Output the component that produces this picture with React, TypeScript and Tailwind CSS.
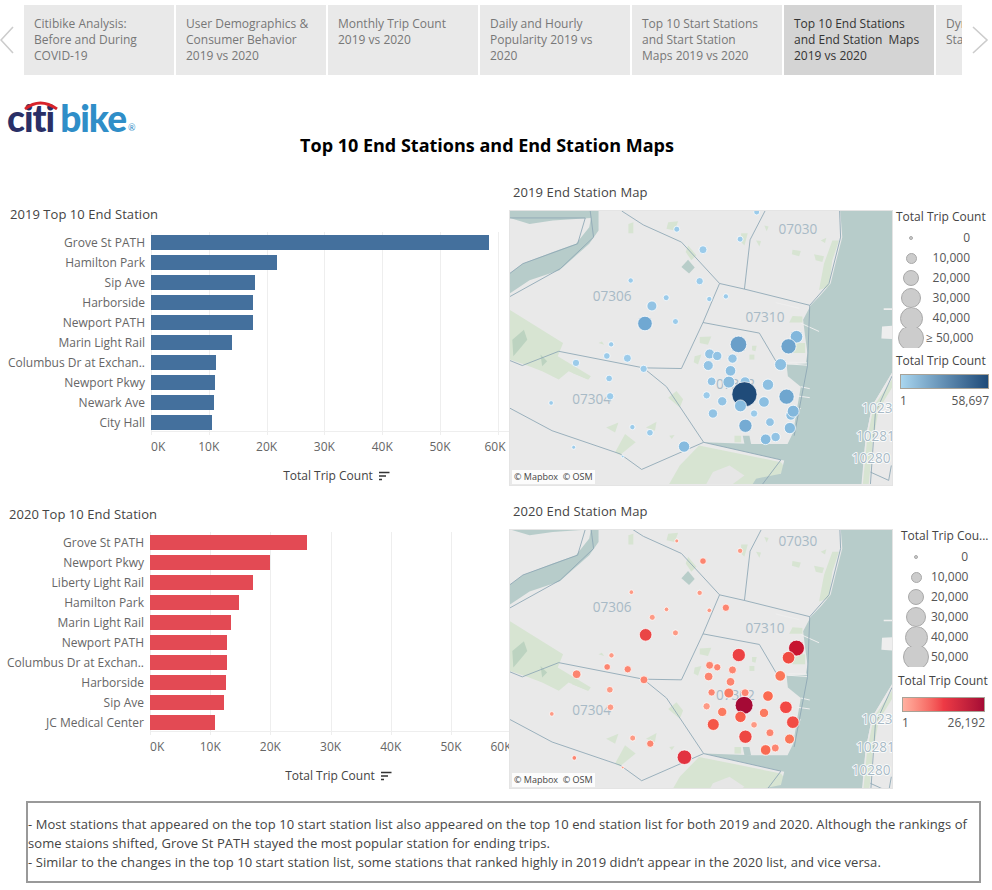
import React from "react";

const FONT = "font-['Open_Sans','Noto_Sans',sans-serif]";

const tabs = [
  { lines: ["Citibike Analysis:", "Before and During", "COVID-19"], w: "w-[150px]", active: false },
  { lines: ["User Demographics &", "Consumer Behavior", "2019 vs 2020"], w: "w-[150px]", active: false },
  { lines: ["Monthly Trip Count", "2019 vs 2020"], w: "w-[150px]", active: false },
  { lines: ["Daily and Hourly", "Popularity 2019 vs", "2020"], w: "w-[150px]", active: false },
  { lines: ["Top 10 Start Stations", "and Start Station", "Maps 2019 vs 2020"], w: "w-[150px]", active: false },
  { lines: ["Top 10 End Stations", "and End Station  Maps", "2019 vs 2020"], w: "w-[150px]", active: true },
  { lines: ["Dynamics", "Stations"], w: "w-[26px]", active: false },
];

type Row = [string, number];
const data2019: Row[] = [
  ["Grove St PATH", 338], ["Hamilton Park", 126], ["Sip Ave", 104], ["Harborside", 102], ["Newport PATH", 102],
  ["Marin Light Rail", 81], ["Columbus Dr at Exchan..", 65], ["Newport Pkwy", 64], ["Newark Ave", 63], ["City Hall", 61],
];
const data2020: Row[] = [
  ["Grove St PATH", 157], ["Newport Pkwy", 120], ["Liberty Light Rail", 103], ["Hamilton Park", 89], ["Marin Light Rail", 81],
  ["Newport PATH", 77], ["Columbus Dr at Exchan..", 77], ["Harborside", 76], ["Sip Ave", 74], ["JC Medical Center", 65],
];

const L19 = "#9bcbea";
const pts2019: [number, number, number, string][] = [
  [772,94,8,L19],[531,146,8,L19],[722,176,8,L19],[610,208,11,L19],[392,301,7,L19],[600,303,10,L19],[499,353,8,L19],[629,357,7,L19],[679,349,7,L19],
  [456,378,14,"#92c3e4"],[435,431,21,"#70a8d2"],[527,425,8,L19],[333,494,7,L19],[320,529,9,L19],[382,536,11,L19],[227,550,10,L19],[431,568,10,L19],
  [327,597,9,L19],[330,651,10,L19],[152,671,6,L19],[397,744,7,L19],[450,761,9,L19],[220,805,5,L19],[368,833,3,L19],[553,803,16,"#86bbdf"],
  [717,494,24,"#6a9fc9"],[892,471,18,"#82b7dc"],[868,500,22,"#6ea4cd"],[630,523,14,"#92c3e4"],[653,529,13,"#92c3e4"],[699,537,13,"#92c3e4"],[626,558,14,"#92c3e4"],
  [844,555,17,"#8cbfe1"],[693,574,15,"#8cbfe1"],[636,606,12,"#92c3e4"],[737,607,14,"#92c3e4"],[688,608,17,"#88bbdd"],[806,616,16,"#8cbfe1"],[621,648,10,L19],
  [668,666,13,"#92c3e4"],[794,668,15,"#8cbfe1"],[862,652,22,"#6fa6cf"],[735,645,37,"#1f4b79"],[723,680,17,"#86bbdf"],[640,703,13,"#92c3e4"],[764,703,10,L19],
  [875,708,14,"#8cbfe1"],[882,696,17,"#82b7dc"],[812,729,12,"#92c3e4"],[738,740,19,"#75abd3"],[872,747,16,"#86bbdf"],[829,774,13,"#92c3e4"],[799,781,15,"#86bbdf"],
];
const L20 = "#fd9a85";
const M20 = "#fc8570";
const pts2020: [number, number, number, string][] = [
  [531,147,5,L20],[722,177,7,L20],[610,208,9,M20],[394,302,6,L20],[600,304,7,L20],[500,354,6,L20],[629,357,6,L20],[679,349,10,M20],[457,378,8,L20],
  [437,431,18,"#ea4646"],[527,425,8,L20],[334,493,7,L20],[321,528,9,M20],[383,535,10,M20],[229,550,12,M20],[432,567,11,M20],[329,597,9,L20],[331,650,9,L20],
  [154,670,6,L20],[398,743,8,L20],[451,760,10,M20],[222,803,6,M20],[368,832,3,L20],[554,801,21,"#e23240"],[718,492,19,"#ec4143"],[892,471,23,"#c7142f"],
  [868,500,18,"#f04a41"],[630,523,11,M20],[653,529,10,M20],[699,537,11,M20],[627,557,12,M20],[843,555,15,"#fb7659"],[693,573,12,M20],[636,605,10,M20],
  [688,607,14,"#fb7a60"],[737,606,11,M20],[806,616,15,"#fb6a50"],[621,647,10,L20],[668,664,13,"#fb7a60"],[794,667,13,"#fb7a60"],[860,650,18,"#f24844"],
  [734,644,26,"#a50a35"],[723,679,16,"#f85e4b"],[641,702,17,"#f45648"],[764,703,9,L20],[881,695,18,"#f24c45"],[812,727,11,M20],[738,739,19,"#ee4743"],
  [871,746,14,"#fb7659"],[828,773,11,M20],[799,779,15,"#f96a52"],
];

const parks = [
  "M28 390 L188 490 L172 530 L272 590 L262 600 L205 575 L175 600 L125 575 L80 558 L28 540 Z",
  "M598 800 L845 850 L860 870 L810 916 L508 916 L540 860 Z",
  "M505 125 L535 122 L525 150 L500 145 Z","M565 195 L590 225 L575 240 L558 215 Z","M880 208 L905 212 L900 228 L878 222 Z",
  "M945 222 L975 228 L970 245 L950 240 Z","M965 180 L982 172 L978 188 Z","M1000 240 L1010 210 L1020 180 L1000 180 L975 250 L960 330 L990 320 Z",
  "M600 472 L635 470 L625 495 L600 490 Z","M585 530 L605 525 L595 555 L582 548 Z","M750 525 L765 525 L765 540 L750 540 Z","M758 498 L772 498 L768 515 L758 512 Z",
  "M318 745 L355 730 L345 760 Z","M345 820 L375 765 L407 790 L360 828 Z","M505 655 L530 635 L550 660 L540 685 Z","M305 485 L312 495 L295 490 Z","M438 745 L470 728 L465 755 Z",
  "M508 770 L524 768 L516 780 Z","M705 770 L725 770 L725 790 L705 790 Z","M725 158 L745 158 L735 195 L725 185 Z","M770 180 L785 182 L780 198 Z","M795 135 L808 138 L802 152 Z",
  "M385 130 L400 125 L400 158 L385 158 Z","M220 570 L270 592 L265 600 L215 580 Z","M880 408 L910 410 L910 428 L870 428 Z","M878 490 L918 490 L918 520 L880 520 Z",
];

function MapArt({ points, viewBox }: { points: [number, number, number, string][]; viewBox: string }) {
  return (
    <svg viewBox={viewBox} preserveAspectRatio="none" className="block w-full h-full">
      <rect x="0" y="0" width="1300" height="1000" fill="#e9e9e9" />
      <path d="M27 91 L295 91 L295 150 L267 190 L177 270 L87 300 L27 340 L27 280 L67 250 L157 215 L227 190 L267 140 L272 112 L157 120 L87 130 L27 112 Z" fill="#b7ccca" />
      {parks.map((d, i) => <path key={i} d={d} fill="#d7e4d2" />)}
      <path d="M35 480 L70 450 L80 480 L55 510 L38 530 Z" fill="#bcd3c0" />
      <path d="M120 525 L140 545 L125 560 Z" fill="#bcd3c0" />
      <path d="M545 260 L565 238 L585 262 L568 280 Z" fill="#b8cdc9" />
      <path d="M640 880 L690 860 L735 890 L700 916 L620 916 Z" fill="#e6e6e6" />
      <path d="M1024 91 L1030 170 L1012 240 L995 310 L965 345 L935 376 L912 420 L918 470 L925 520 L920 552 L862 555 L866 590 L905 622 L895 680 L882 760 L865 795 L760 795 L612 790 L855 845 L845 885 L770 900 L760 916 L1090 916 L1100 780 L1120 680 L1180 580 L1180 91 Z" fill="#b7ccca" />
      <path d="M1180 580 L1120 680 L1100 780 L1088 916 L1180 916 Z" fill="#e9e9e9" />
      <path d="M1180 600 L1125 680 L1105 780 L1092 916 L1110 916 L1122 790 L1140 690 L1180 625 Z" fill="#d7e4d2" />
      <path d="M1150 440 L1180 438 L1180 478 L1148 476 Z M1155 385 L1180 385 L1180 390 L1155 390 Z" fill="#eeeeee" />
      <path d="M865 553 L925 557 M868 548 L925 550 M905 622 L932 628 M895 650 L932 655 M885 690 L905 688 M905 430 L960 455 M830 368 L900 385" stroke="#eeeeee" strokeWidth="3" fill="none" />
      <path d="M730 770 L750 770 L755 795 L735 795 Z" fill="#b7ccca" />
      <g fill="none" stroke="#8da7b4" strokeWidth="2.6" strokeLinejoin="round">
        <path d="M365 91 L430 133 L545 185 L660 310 L735 327 L932 376 L990 310 L1025 170 L1022 91" />
        <path d="M797 91 L752 178 L735 327" />
        <path d="M660 310 L610 428 L545 567 L430 565 L175 515 L65 558 L28 543" />
        <path d="M610 428 L780 460 L830 545" />
        <path d="M932 376 L925 560 L885 770" />
        <path d="M430 565 L500 622 L612 790 L845 843 L790 916" />
        <path d="M612 790 L425 872 L360 825 L155 755 L28 687" />
        <path d="M27 112 L255 112 L232 190 L67 250 L27 280" />
        <path d="M27 350 L180 265 L280 170 L270 91" />
        <path d="M1180 590 L1130 700 L1115 916" />
        <path d="M1115 880 L1170 905 L1178 860" />
      </g>
      <g fill="#a8bac6" fontSize="41" fontFamily="Open Sans, sans-serif" textAnchor="middle">
        <text x="896" y="162">07030</text>
        <text x="336" y="362">07306</text>
        <text x="797" y="426">07310</text>
        <text x="274" y="674">07304</text>
        <text x="708" y="628">07302</text>
        <text x="1135" y="702" stroke="#ffffff" strokeWidth="5" paintOrder="stroke">1023</text>
        <text x="1130" y="786" stroke="#ffffff" strokeWidth="5" paintOrder="stroke">10281</text>
        <text x="1117" y="854" stroke="#ffffff" strokeWidth="5" paintOrder="stroke">10280</text>
      </g>
      {points.map(([x, y, r, c], i) => (
        <circle key={i} cx={x} cy={y} r={r + 1} fill={c} stroke="#ffffff" strokeOpacity="0.75" strokeWidth="3" />
      ))}
    </svg>
  );
}

function SortIcon() {
  return (
    <svg width="11" height="11" viewBox="0 0 11 11" className="ml-[6px]">
      <path d="M0 1.5 H10.5 M0 5 H7 M0 8.5 H3" stroke="#333333" strokeWidth="1.4" fill="none" />
    </svg>
  );
}

function BarChart({ title, rows, color, step, lastCentre, labelW, topPad, labelInset, titleInset }: {
  title: string; rows: Row[]; color: string; step: number; lastCentre: number; labelW: string; topPad: string; labelInset: string; titleInset: string;
}) {
  const ticks = [0, 1, 2, 3, 4, 5, 6];
  return (
    <div className={`${topPad} w-[509px] overflow-hidden`}>
      <div className={`h-[18px] leading-[18px] text-[13px] tracking-[0.05px] text-[#444] ${labelInset}`}>{title}</div>
      <div className="flex mt-[9px]">
        <div className={`${labelW} shrink-0 pt-[3px] flex flex-col gap-[5px] pr-[6px]`}>
          {rows.map((r) => (
            <div key={r[0]} className="h-[15px] leading-[15px] text-[12px] text-[#666] text-right whitespace-nowrap">{r[0]}</div>
          ))}
        </div>
        <div className="flex-1 relative min-w-0">
          <div className="relative h-[200px] border-b border-[#eeeeee] pt-[3px] flex flex-col gap-[5px]">
            {ticks.map((t) => (
              <div key={t} className="absolute top-0 bottom-[-4px] w-px bg-[#eeeeee]" style={{ left: t * step }} />
            ))}
            {rows.map((r) => (
              <div key={r[0]} className="relative h-[15px] shrink-0" style={{ width: r[1], backgroundColor: color }} />
            ))}
          </div>
          <div className="relative h-[22px] mt-[4px] text-[12px] text-[#666] leading-[22px]">
            {ticks.map((t) => (
              <span key={t} className={`absolute top-0 whitespace-nowrap ${t === 0 ? "" : "-translate-x-1/2"}`} style={{ left: t === 0 ? 0 : t === 6 ? lastCentre : t * step }}>{t * 10}K</span>
            ))}
          </div>
        </div>
      </div>
      <div className={`flex items-center justify-center mt-[9px] text-[12px] font-medium text-[#444] ${titleInset}`}>
        Total Trip Count<SortIcon />
      </div>
    </div>
  );
}

function SizeLegend({ values, widthClass, title }: { values: string[]; widthClass: string; title: string }) {
  const sizes = ["w-[4px] h-[4px]", "w-[11px] h-[11px]", "w-[16px] h-[16px]", "w-[20px] h-[20px]", "w-[23px] h-[23px]", "w-[26px] h-[26px]"];
  return (
    <div className={widthClass}>
      <div className="h-[14px] leading-[14px] text-[12px] font-medium text-[#444] whitespace-nowrap mb-[4px]">{title}</div>
      {values.map((v, i) => (
        <div key={v} className="relative h-[20px] flex items-center text-[12px] text-[#555]">
          <div className="w-[30px] h-[20px] shrink-0 flex items-center justify-center overflow-hidden">
            <div className={`${sizes[i]} shrink-0 rounded-full bg-[#cccccc] border-[1.5px] border-[#a9a9a9]`} />
          </div>
          <div className="flex-1 text-right whitespace-nowrap">{v}</div>
        </div>
      ))}
    </div>
  );
}

function MapBox({ heightClass, children }: { heightClass: string; children: React.ReactNode }) {
  return (
    <div className={`relative w-[384px] ${heightClass} overflow-hidden shrink-0 border border-[#e4e4e4]`}>
      {children}
      <div className="absolute left-[2px] bottom-[1px] h-[14px] px-[2px] bg-white/85 text-[9px] leading-[14px] text-[#444] whitespace-nowrap">© Mapbox&nbsp;&nbsp;© OSM</div>
    </div>
  );
}

export default function App() {
  return (
    <div className={`w-[992px] h-[890px] overflow-hidden bg-white ${FONT}`}>
      <nav className="flex h-[70px] mt-[5px] pt-0">
        <svg width="24" height="70" viewBox="0 0 24 70" className="shrink-0">
          <path d="M13 22 L1 35 L13 48" stroke="#cccccc" strokeWidth="1.6" fill="none" />
        </svg>
        <div className="flex gap-[2px] w-[938px] overflow-hidden shrink-0">
          {tabs.map((t) => (
            <div key={t.lines[0]} className={`${t.w} h-[70px] shrink-0 overflow-hidden pl-[10px] pt-[11px] text-[12px] leading-[16px] whitespace-pre ${t.active ? "bg-[#d4d4d4] text-[#333]" : "bg-[#e9e9e9] text-[#777]"}`}>
              {t.lines.map((l) => <div key={l}>{l}</div>)}
            </div>
          ))}
        </div>
        <svg width="30" height="70" viewBox="0 0 30 70" className="shrink-0">
          <path d="M11 22 L25 35 L11 48" stroke="#cccccc" strokeWidth="1.6" fill="none" />
        </svg>
      </nav>

      <div className="relative ml-[7px] mt-[25px] h-[37px] flex items-end leading-none font-['Lato',sans-serif] font-black text-[37px] tracking-[-1px]">
        <span className="text-[#2a2f66] leading-[38px]">citi</span>
        <span className="text-[#2f8ec8] leading-[38px] ml-[6px]">bike</span>
        <span className="text-[#2f8ec8] text-[9px] font-normal ml-[2px] mb-[5px] tracking-normal">®</span>
        <svg width="34" height="10" viewBox="0 0 34 10" className="absolute left-[17px] top-0">
          <path d="M1 9 Q16 -3 33 9" stroke="#d8232a" strokeWidth="2.8" fill="none" />
        </svg>
      </div>

      <h1 className="w-[974px] -mt-[4px] text-center text-[18px] leading-[24px] font-bold text-black">Top 10 End Stations and End Station Maps</h1>

      <div className="grid grid-cols-[509px_483px] mt-[26px] h-[317px]">
        <BarChart title="2019 Top 10 End Station" rows={data2019} color="#44709d" step={57.8} lastCentre={344} labelW="w-[151px]" topPad="pt-[22px]" labelInset="pl-[10px]" titleInset="pl-[164px]" />
        <div className="min-w-0">
          <div className="h-[18px] leading-[18px] text-[13px] tracking-[0.1px] text-[#444] pl-[4px]">2019 End Station Map</div>
          <div className="flex mt-[9px]">
            <MapBox heightClass="h-[276px]">
              <MapArt points={pts2019} viewBox="28 91 1152 828" />
            </MapBox>
            <div className="pl-[3px] w-[99px]">
              <SizeLegend title="Total Trip Count" widthClass="w-[74px]" values={["0", "10,000", "20,000", "30,000", "40,000", "≥ 50,000"]} />
              <div className="mt-[6px] h-[14px] leading-[14px] text-[12px] font-medium text-[#444] whitespace-nowrap">Total Trip Count</div>
              <div className="ml-[4px] mt-[6px] w-[89px] h-[15px] border border-[#a8a296] bg-gradient-to-r from-[#a9d6ef] to-[#1f4b79]" />
              <div className="ml-[4px] w-[89px] flex justify-between text-[12px] leading-[18px] mt-[3px] text-[#555]"><span>1</span><span>58,697</span></div>
            </div>
          </div>
        </div>
      </div>

      <div className="grid grid-cols-[509px_483px] h-[297px]">
        <BarChart title="2020 Top 10 End Station" rows={data2020} color="#e34a54" step={60.2} lastCentre={351} labelW="w-[150px]" topPad="pt-[5px]" labelInset="pl-[9px]" titleInset="pl-[168px]" />
        <div className="min-w-0 pt-[2px]">
          <div className="h-[18px] leading-[18px] text-[13px] tracking-[0.1px] text-[#444] pl-[4px]">2020 End Station Map</div>
          <div className="flex mt-[9px]">
            <MapBox heightClass="h-[260px]">
              <MapArt points={pts2020} viewBox="28 114 1152 780" />
            </MapBox>
            <div className="pl-[5px] w-[99px]">
              <div className="pl-[3px]">
                <SizeLegend title="Total Trip Cou..." widthClass="w-[67px]" values={["0", "10,000", "20,000", "30,000", "40,000", "50,000"]} />
              </div>
              <div className="mt-[7px] h-[14px] leading-[14px] text-[12px] font-medium text-[#444] whitespace-nowrap">Total Trip Count</div>
              <div className="ml-[4px] mt-[9px] w-[83px] h-[15px] border border-[#a8a296] bg-gradient-to-r from-[#ffb0a0] via-[#ee3a45] to-[#a50a35]" />
              <div className="ml-[4px] w-[83px] flex justify-between text-[12px] leading-[18px] mt-[2px] text-[#555]"><span>1</span><span>26,192</span></div>
            </div>
          </div>
        </div>
      </div>

      <div className="mx-[26px] w-[955px] h-[82px] mt-[4px] border-2 border-[#999999] text-[13px] leading-[19px] text-[#444] pt-[12px] tracking-[0.07px] whitespace-nowrap overflow-hidden">
        <div>- Most stations that appeared on the top 10 start station list also appeared on the top 10 end station list for both 2019 and 2020. Although the rankings of</div>
        <div>some staions shifted, Grove St PATH stayed the most popular station for ending trips.</div>
        <div>- Similar to the changes in the top 10 start station list, some stations that ranked highly in 2019 didn’t appear in the 2020 list, and vice versa.</div>
      </div>
    </div>
  );
}
